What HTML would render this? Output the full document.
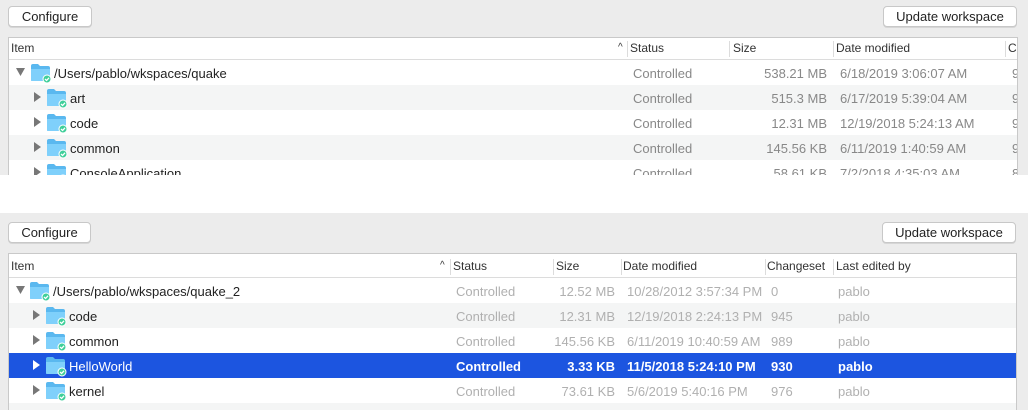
<!DOCTYPE html>
<html><head><style>
*{margin:0;padding:0;box-sizing:border-box}
body{width:1028px;height:410px;background:#fff;font-family:"Liberation Sans",Arial,sans-serif;font-size:13px;color:#222;position:relative;overflow:hidden}
.panel{position:absolute;left:0;width:1028px;background:#ececec;overflow:hidden}
.btn{position:absolute;height:21px;background:#fff;border:1px solid #c8c8c8;border-radius:4px;font-size:13px;line-height:19px;text-align:center;color:#222;box-shadow:0 1px 0 #d6d6d6}
.tbl{position:absolute;left:8px;width:1010px;background:#fff;border:1px solid #c9c9c9;overflow:hidden}
.hdr{position:relative;height:23px;border-bottom:1px solid #dcdcdc;font-size:12px;color:#333}
.hdr span{position:absolute;top:4px}
.hdr i{position:absolute;top:4px;width:1px;height:16px;background:#dcdcdc}
.row{position:relative;height:25px;color:#888}
.row.alt{background:#f4f5f5}
.row span{position:absolute;top:6px;white-space:nowrap}
.row .n{color:#222}
.r{text-align:right}
.sel{background:#1c55e0!important;color:#fff!important;font-weight:bold}
.sel span,.sel .n{color:#fff}
.light{color:#b0b0b0}
svg{position:absolute}
</style></head><body>
<svg width="0" height="0" style="position:absolute"><defs>
<g id="f"><path d="M1 3 Q1 1 3 1 L8 1 L10 3 L18 3 Q20 3 20 5 L20 17 Q20 18 19 18 L2 18 Q1 18 1 17 Z" fill="#5ab8ef"/><path d="M1 6 L20 6 L20 17 Q20 18 19 18 L2 18 Q1 18 1 17 Z" fill="#7fd0fb"/><circle cx="17" cy="16" r="4" fill="#3fcf9a" stroke="#fff" stroke-width="1"/><path d="M15 16 L16.6 17.5 L19 14.8" stroke="#fff" stroke-width="1.3" fill="none"/></g>
</defs></svg>

<!-- top panel -->
<div class="panel" style="top:0;height:175px">
<div class="btn" style="left:8px;top:6px;width:84px">Configure</div>
<div class="btn" style="left:883px;top:6px;width:134px">Update workspace</div>
<div class="tbl" style="top:37px;height:150px">
<div class="hdr" style="height:22px"><span style="left:2px;top:3px">Item</span><span style="left:609px;font-size:10px;top:4px">^</span><i style="left:618px;top:3px"></i><span style="left:621px;top:3px">Status</span><i style="left:720px;top:3px"></i><span style="left:724px;top:3px">Size</span><i style="left:824px;top:3px"></i><span style="left:827px;top:3px">Date modified</span><i style="left:996px;top:3px"></i><span style="left:999px;top:3px">C</span></div>
<div class="row"><svg style="left:7px;top:8px" width="10" height="9"><path d="M0 0 L9 0 L4.5 8Z" fill="#777"/></svg><svg style="left:21px;top:3px" width="22" height="21"><use href="#f"/></svg><span class="n" style="left:45px">/Users/pablo/wkspaces/quake</span><span style="left:624px">Controlled</span><span class="r" style="left:718px;width:100px">538.21 MB</span><span style="left:831px">6/18/2019 3:06:07 AM</span><span style="left:1003px">9</span></div>
<div class="row alt"><svg style="left:25px;top:7px" width="8" height="10"><path d="M0 0 L7 5 L0 10Z" fill="#777"/></svg><svg style="left:37px;top:3px" width="22" height="21"><use href="#f"/></svg><span class="n" style="left:61px">art</span><span style="left:624px">Controlled</span><span class="r" style="left:718px;width:100px">515.3 MB</span><span style="left:831px">6/17/2019 5:39:04 AM</span><span style="left:1003px">9</span></div>
<div class="row"><svg style="left:25px;top:7px" width="8" height="10"><path d="M0 0 L7 5 L0 10Z" fill="#777"/></svg><svg style="left:37px;top:3px" width="22" height="21"><use href="#f"/></svg><span class="n" style="left:61px">code</span><span style="left:624px">Controlled</span><span class="r" style="left:718px;width:100px">12.31 MB</span><span style="left:831px">12/19/2018 5:24:13 AM</span><span style="left:1003px">9</span></div>
<div class="row alt"><svg style="left:25px;top:7px" width="8" height="10"><path d="M0 0 L7 5 L0 10Z" fill="#777"/></svg><svg style="left:37px;top:3px" width="22" height="21"><use href="#f"/></svg><span class="n" style="left:61px">common</span><span style="left:624px">Controlled</span><span class="r" style="left:718px;width:100px">145.56 KB</span><span style="left:831px">6/11/2019 1:40:59 AM</span><span style="left:1003px">9</span></div>
<div class="row"><svg style="left:25px;top:7px" width="8" height="10"><path d="M0 0 L7 5 L0 10Z" fill="#777"/></svg><svg style="left:37px;top:3px" width="22" height="21"><use href="#f"/></svg><span class="n" style="left:61px">ConsoleApplication</span><span style="left:624px">Controlled</span><span class="r" style="left:718px;width:100px">58.61 KB</span><span style="left:831px">7/2/2018 4:35:03 AM</span><span style="left:1003px">8</span></div>
</div>
</div>

<!-- bottom panel -->
<div class="panel" style="top:213px;height:197px">
<div class="btn" style="left:8px;top:9px;width:83px">Configure</div>
<div class="btn" style="left:882px;top:9px;width:134px">Update workspace</div>
<div class="tbl" style="top:40px;height:170px;width:1009px">
<div class="hdr" style="height:24px"><span style="left:2px;top:5px">Item</span><span style="left:431px;font-size:10px;top:6px">^</span><i style="left:441px;top:5px"></i><span style="left:444px;top:5px">Status</span><i style="left:544px;top:5px"></i><span style="left:547px;top:5px">Size</span><i style="left:612px;top:5px"></i><span style="left:614px;top:5px">Date modified</span><i style="left:756px;top:5px"></i><span style="left:758px;top:5px">Changeset</span><i style="left:824px;top:5px"></i><span style="left:827px;top:5px">Last edited by</span></div>
<div class="row light"><svg style="left:7px;top:8px" width="10" height="9"><path d="M0 0 L9 0 L4.5 8Z" fill="#777"/></svg><svg style="left:20px;top:3px" width="22" height="21"><use href="#f"/></svg><span class="n" style="left:44px">/Users/pablo/wkspaces/quake_2</span><span style="left:447px">Controlled</span><span class="r" style="left:506px;width:100px">12.52 MB</span><span style="left:618px">10/28/2012 3:57:34 PM</span><span style="left:762px">0</span><span style="left:829px">pablo</span></div>
<div class="row alt light"><svg style="left:24px;top:7px" width="8" height="10"><path d="M0 0 L7 5 L0 10Z" fill="#777"/></svg><svg style="left:36px;top:3px" width="22" height="21"><use href="#f"/></svg><span class="n" style="left:60px">code</span><span style="left:447px">Controlled</span><span class="r" style="left:506px;width:100px">12.31 MB</span><span style="left:618px">12/19/2018 2:24:13 PM</span><span style="left:762px">945</span><span style="left:829px">pablo</span></div>
<div class="row light"><svg style="left:24px;top:7px" width="8" height="10"><path d="M0 0 L7 5 L0 10Z" fill="#777"/></svg><svg style="left:36px;top:3px" width="22" height="21"><use href="#f"/></svg><span class="n" style="left:60px">common</span><span style="left:447px">Controlled</span><span class="r" style="left:506px;width:100px">145.56 KB</span><span style="left:618px">6/11/2019 10:40:59 AM</span><span style="left:762px">989</span><span style="left:829px">pablo</span></div>
<div class="row sel"><svg style="left:24px;top:7px" width="8" height="10"><path d="M0 0 L7 5 L0 10Z" fill="#fff"/></svg><svg style="left:36px;top:3px" width="22" height="21"><use href="#f"/></svg><span class="n" style="left:60px;font-weight:normal">HelloWorld</span><span style="left:447px">Controlled</span><span class="r" style="left:506px;width:100px">3.33 KB</span><span style="left:618px">11/5/2018 5:24:10 PM</span><span style="left:762px">930</span><span style="left:829px">pablo</span></div>
<div class="row light"><svg style="left:24px;top:7px" width="8" height="10"><path d="M0 0 L7 5 L0 10Z" fill="#777"/></svg><svg style="left:36px;top:3px" width="22" height="21"><use href="#f"/></svg><span class="n" style="left:60px">kernel</span><span style="left:447px">Controlled</span><span class="r" style="left:506px;width:100px">73.61 KB</span><span style="left:618px">5/6/2019 5:40:16 PM</span><span style="left:762px">976</span><span style="left:829px">pablo</span></div>
<div class="row alt"></div>
</div>
</div>
</body></html>
